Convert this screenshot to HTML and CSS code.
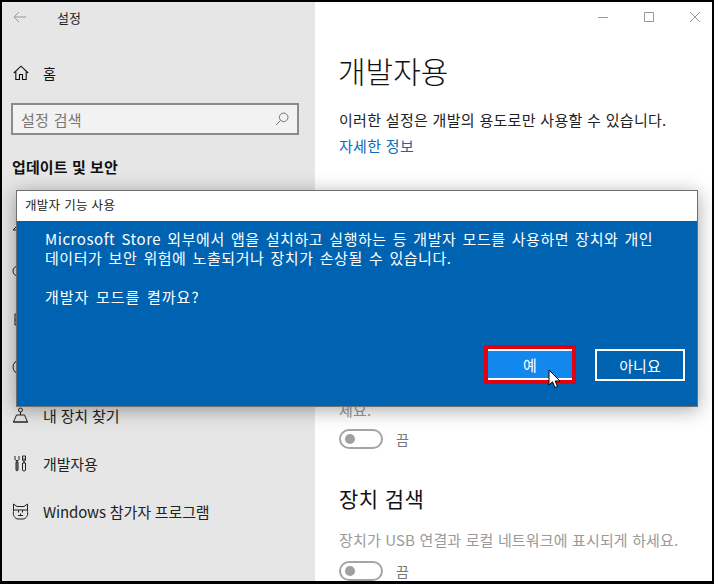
FILE: index.html
```html
<!DOCTYPE html>
<html lang="ko">
<head>
<meta charset="utf-8">
<title>설정</title>
<link rel="stylesheet" href="styles.css">
</head>
<body>
<div class="frame">
  <aside class="side">
    <div class="titlebar">
      <svg class="back" width="14" height="12" viewBox="0 0 14 12"><path d="M13 6H1M6 1 1 6l5 5" fill="none" stroke="#999" stroke-width="1"/></svg>
      <span class="apptitle">설정</span>
    </div>
    <div class="home">
      <svg width="16" height="16" viewBox="0 0 16 16"><path d="M.8 8 8 1.2 15.2 8M2.8 6.5V14.5H6.5V9.5H9.5V14.5H13.2V6.5" fill="none" stroke="#111" stroke-width="1.1"/></svg>
      <span>홈</span>
    </div>
    <div class="search">
      <span>설정 검색</span>
      <svg width="14" height="14" viewBox="0 0 14 14"><circle cx="8.7" cy="5.3" r="4.3" fill="none" stroke="#777"/><path d="M5.6 8.4 1 13" stroke="#777"/></svg>
    </div>
    <h2 class="group">업데이트 및 보안</h2>
    <nav class="nav">
      <div class="item"><svg width="17" height="17" viewBox="0 0 17 17"><path d="M1 15 15 1M1 15h14" fill="none" stroke="#222"/></svg></div>
      <div class="item"><svg width="17" height="17" viewBox="0 0 17 17"><circle cx="6" cy="8" r="5" fill="none" stroke="#222"/></svg></div>
      <div class="item"><svg width="17" height="17" viewBox="0 0 17 17"><path d="M3 3h11v11H3zM3 9h6" fill="none" stroke="#222"/></svg></div>
      <div class="item"><svg width="17" height="17" viewBox="0 0 17 17"><circle cx="8" cy="8" r="7" fill="none" stroke="#222"/></svg></div>
      <div class="item">
        <svg width="17" height="17" viewBox="0 0 17 17"><circle cx="8.5" cy="3" r="2" fill="none" stroke="#222"/><path d="M8.5 5V8M4.5 8H12.5L15.5 15H1.5ZM1 15H16" fill="none" stroke="#222"/></svg>
        <span>내 장치 찾기</span>
      </div>
      <div class="item">
        <svg width="17" height="17" viewBox="0 0 17 17"><path d="M3 1V4.500C3 6 7 6 7 4.500V1M5 6V15.500M4 7H6V15C6 16 4 16 4 15ZM10.500 1H13.500V4H10.500ZM10.500 4 11 6H13L13.500 4M12 6V8M10.500 8H13.500V15C13.500 16.300 10.500 16.300 10.500 15Z" fill="none" stroke="#222"/></svg>
        <span>개발자용</span>
      </div>
      <div class="item">
        <svg width="17" height="17" viewBox="0 0 17 17"><path d="M1.500 1 5 3.500H12L15.500 1V8.500C16.500 12 14 16 11 16H6C3 16 .5 12 1.500 8.500ZM1.500 7H15.500M6.500 7V9.500M10.500 7V9.500M6 12.500H11M8.500 10.500V12.500" fill="none" stroke="#222"/></svg>
        <span>Windows 참가자 프로그램</span>
      </div>
    </nav>
  </aside>
  <main class="main">
    <div class="controls">
      <svg width="12" height="12" viewBox="0 0 12 12"><path d="M1 6.500H11" stroke="#999"/></svg>
      <svg width="12" height="12" viewBox="0 0 12 12"><path d="M1.500 1.500H10.500V10.500H1.500Z" fill="none" stroke="#999"/></svg>
      <svg width="12" height="12" viewBox="0 0 12 12"><path d="M1 1 11 11M11 1 1 11" stroke="#999"/></svg>
    </div>
    <h1 class="heading">개발자용</h1>
    <p class="lead">이러한 설정은 개발의 용도로만 사용할 수 있습니다.</p>
    <a class="link">자세한 정보</a>
    <div class="covered">
      <p class="muted">세요.</p>
      <div class="toggle"><span class="switch"><i></i></span><span>끔</span></div>
    </div>
    <h2 class="section">장치 검색</h2>
    <p class="muted">장치가 USB 연결과 로컬 네트워크에 표시되게 하세요.</p>
    <div class="toggle second"><span class="switch"><i></i></span><span>끔</span></div>
  </main>
</div>
<div class="dialog">
  <div class="dlg-title">개발자 기능 사용</div>
  <div class="dlg-body">
    <p>Microsoft Store 외부에서 앱을 설치하고 실행하는 등 개발자 모드를 사용하면 장치와 개인<br>데이터가 보안 위험에 노출되거나 장치가 손상될 수 있습니다.</p>
    <p class="ask">개발자 모드를 켤까요?</p>
    <div class="actions">
      <button class="btn yes">예</button>
      <button class="btn">아니요</button>
    </div>
  </div>
</div>
<svg class="cursor" width="13" height="20" viewBox="0 0 13 20"><path d="M1 1V16L4.500 12.800 7 18.500 9.500 17.500 7.200 12H12Z" fill="#fff" stroke="#000"/></svg>
</body>
</html>
```
FILE: styles.css
```css
* { box-sizing: border-box; }
html, body { margin: 0; height: 100%; }
body {
  position: relative;
  width: 714px;
  height: 584px;
  overflow: hidden;
  background: #fff;
  font-family: "Noto Sans CJK KR", "Liberation Sans", sans-serif;
  color: #111;
}
.frame {
  display: flex;
  width: 714px;
  height: 584px;
  border: solid #000;
  border-width: 2px 2px 3px 2px;
  background: #fff;
}
.side {
  width: 313px;
  flex: none;
  background: #e6e6e6;
  padding: 0 9px;
}
.titlebar {
  display: flex;
  align-items: center;
  height: 30px;
  padding-left: 2px;
}
.back { flex: none; }
.apptitle { margin-left: 30px; font-size: 13px; color: #222; }
.home {
  display: flex;
  align-items: center;
  gap: 14px;
  margin-top: 28px;
  height: 26px;
  padding-left: 2px;
  font-size: 14px;
}
.search {
  display: flex;
  align-items: center;
  justify-content: space-between;
  height: 32px;
  margin-top: 17px;
  width: 288px;
  border: 2px solid #8b8b8b;
  background: #f2f2f2;
  padding: 0 8px;
  font-size: 15px;
  color: #777;
  letter-spacing: .3px;
}
.group {
  margin: 20px 0 0 1px;
  font-size: 15px;
  line-height: 24px;
  font-weight: 700;
  letter-spacing: .1px;
}
.nav { margin-top: 20px; }
.item {
  display: flex;
  align-items: center;
  gap: 14px;
  height: 48px;
  padding-left: 1px;
  font-size: 15px;
  letter-spacing: -.15px;
  color: #222;
}
.item svg { flex: none; }
.main {
  flex: 1;
  padding: 0 24px;
  position: relative;
}
.controls {
  display: flex;
  justify-content: flex-end;
  gap: 34px;
  height: 26px;
  padding: 9px 0 0;
  margin-right: -13px;
}
.heading {
  margin: 20px 0 0 -1px;
  font-size: 30px;
  line-height: 44px;
  font-weight: 300;
  color: #111;
}
.lead {
  margin: 16px 0 0;
  font-size: 15px;
  line-height: 24px;
  color: #222;
  letter-spacing: .3px;
}
.link {
  display: block;
  margin-top: 2px;
  font-size: 15px;
  line-height: 24px;
  color: #0a6cb8;
  letter-spacing: .3px;
}
.covered { margin-top: 241px; }
.muted {
  margin: 0;
  font-size: 15px;
  line-height: 22px;
  color: #9a9a9a;
  letter-spacing: .15px;
}
.toggle {
  display: flex;
  align-items: center;
  gap: 13px;
  height: 20px;
  margin-top: 8px;
  font-size: 14px;
  color: #777;
}
.switch {
  display: flex;
  align-items: center;
  width: 44px;
  height: 20px;
  border: 2px solid #a5a5a5;
  border-radius: 10px;
  padding-left: 4px;
}
.switch i {
  width: 10px;
  height: 10px;
  border-radius: 50%;
  background: #a0a0a0;
}
.section {
  margin: 33px 0 0;
  font-size: 21px;
  line-height: 32px;
  font-weight: 400;
  letter-spacing: .4px;
}
.section + .muted { margin-top: 15px; }
.second { margin-top: 10px; }
.dialog {
  position: absolute;
  left: 16px;
  top: 190px;
  width: 682px;
  height: 217px;
  border: 1px solid #6f6f6f;
  background: #0063b1;
  box-shadow: 0 3px 18px rgba(0, 0, 0, .35);
  display: flex;
  flex-direction: column;
}
.dlg-title {
  height: 30px;
  flex: none;
  background: #fff;
  padding-left: 8px;
  font-size: 12.500px;
  line-height: 28px;
  color: #222;
  letter-spacing: .3px;
}
.dlg-body {
  flex: 1;
  display: flex;
  flex-direction: column;
  padding: 8px 12px 25px 28px;
  color: #fff;
  font-size: 15px;
  line-height: 19px;
  letter-spacing: .55px;
  word-spacing: 1.400px;
}
.dlg-body p { margin: 0; }
.dlg-body .ask { margin-top: 20px; letter-spacing: 1px; }
.actions {
  margin-top: auto;
  display: flex;
  justify-content: flex-end;
  align-items: flex-start;
  gap: 23px;
}
.btn {
  width: 90px;
  height: 32px;
  border: 2px solid #fff;
  background: transparent;
  color: #fff;
  font: inherit;
  padding: 0;
}
.yes {
  width: 84px;
  height: 31px;
  background: #1287ee;
  border: solid #fff;
  border-width: 2px 0;
  outline: 4px solid #e3000f;
  outline-offset: 0;
}
.cursor { position: absolute; left: 548px; top: 369px; }
```
